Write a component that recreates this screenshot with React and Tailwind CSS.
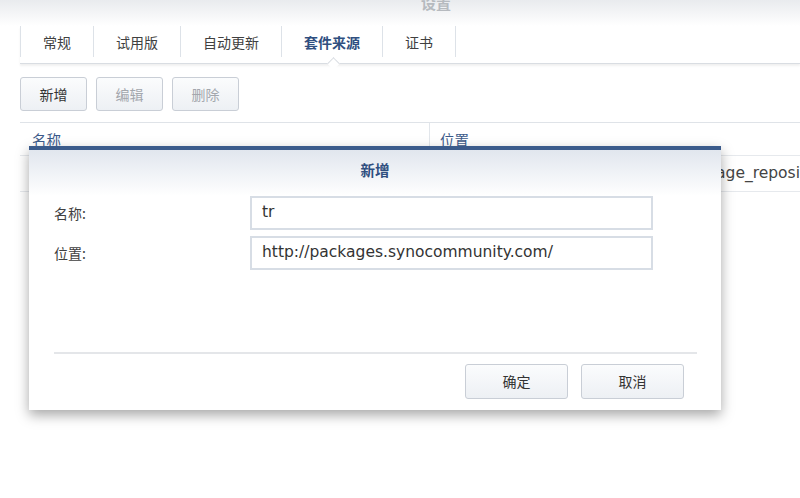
import React from 'react';

const tabs = ['常规', '试用版', '自动更新', '套件来源', '证书'];
const cjk = { fontFamily: '"Noto Sans CJK SC", "Noto Sans", sans-serif' };
const latin = { fontFamily: '"DejaVu Sans", "Noto Sans CJK SC", sans-serif' };

function ToolButton({ label, disabled }) {
  return (
    <button
      className={`h-[34px] w-[67px] rounded-[3px] border border-[#c9ced6] bg-gradient-to-b from-[#fbfcfd] to-[#edf0f4] text-[14px] ${disabled ? 'text-[#a3a7ad]' : 'text-[#333]'}`}
    >
      {label}
    </button>
  );
}

function Field({ label, value }) {
  return (
    <div className="flex items-center h-[34px]">
      <div className="w-[196px] text-[14px] text-[#404040]">{label}</div>
      <div className="w-[403px] h-[34px] border-2 border-[#d7dde5] bg-white flex items-center px-[10px] text-[15.5px] text-[#333]" style={latin}>
        {value}
      </div>
    </div>
  );
}

export default function App() {
  return (
    <div className="relative w-[800px] h-[498px] overflow-hidden bg-white" style={cjk}>
      {/* window title */}
      <div className="h-[26px] bg-gradient-to-b from-[#e9ebee] to-white flex justify-center">
        <div className="-mt-[8px] ml-[72px] text-[15px] leading-[22px] font-bold text-[#b6babf]">设置</div>
      </div>

      <div className="pl-[20px]">
        {/* tabs */}
        <div className="relative flex h-[38px] border-b border-[#d9dde2] shadow-[0_2px_2px_rgba(0,0,0,0.06)]">
          <div className="w-px h-[31px] bg-[#dde2e8]" />
          {tabs.map((t, i) => (
            <div key={t} className="relative flex">
              <div className={`px-[22px] pt-[6px] text-[14px] ${i === 3 ? 'text-[#2f4f80] font-bold' : 'text-[#404040]'}`}>{t}</div>
              <div className="w-px h-[31px] bg-[#dde2e8]" />
              {i === 3 && (
                <div className="absolute left-[47px] -bottom-[5px] w-[9px] h-[9px] rotate-45 bg-white border-l border-t border-[#d9dde2]" />
              )}
            </div>
          ))}
        </div>

        {/* toolbar */}
        <div className="flex gap-[9px] mt-[13px]">
          <ToolButton label="新增" />
          <ToolButton label="编辑" disabled />
          <ToolButton label="删除" disabled />
        </div>

        {/* table */}
        <div className="mt-[11px] border-t border-[#dfe3e8]">
          <div className="flex h-[33px] border-b border-[#e6e9ed]">
            <div className="w-[410px] pl-[12px] pt-[6px] text-[14.5px] text-[#3c5a8a] border-r border-[#e2e6eb]">名称</div>
            <div className="pl-[10px] pt-[6px] text-[14.5px] text-[#3c5a8a]">位置</div>
          </div>
          <div className="flex h-[36px] border-b border-[#e6e9ed] items-center">
            <div className="w-[702px]" />
            <div className="text-[15.5px] text-[#444] whitespace-nowrap" style={latin}>age_reposi</div>
          </div>
        </div>
      </div>

      {/* dialog */}
      <div className="absolute left-[29px] top-[146px] w-[692px] h-[264px] bg-white border-t-4 border-[#3b5b8b] shadow-[0_5px_12px_rgba(0,0,0,0.35)] flex flex-col">
        <div className="h-[46px] bg-gradient-to-b from-[#e1e6ee] to-white flex items-center justify-center">
          <div className="text-[14.5px] font-bold text-[#2f4f80] mb-[6px]">新增</div>
        </div>
        <div className="px-[25px] flex flex-col gap-[6px]">
          <Field label="名称:" value="tr" />
          <Field label="位置:" value="http://packages.synocommunity.com/" />
        </div>
        <div className="mx-[25px] mr-[24px] mt-[82px] border-t-2 border-[#e4e6e9]" />
        <div className="flex justify-end gap-[13px] pr-[37px] mt-[10px]">
          <button className="w-[103px] h-[35px] rounded-[3px] border border-[#c9ced6] bg-gradient-to-b from-[#fbfcfd] to-[#edf0f4] text-[14px] text-[#333]">确定</button>
          <button className="w-[103px] h-[35px] rounded-[3px] border border-[#c9ced6] bg-gradient-to-b from-[#fbfcfd] to-[#edf0f4] text-[14px] text-[#333]">取消</button>
        </div>
      </div>
    </div>
  );
}
